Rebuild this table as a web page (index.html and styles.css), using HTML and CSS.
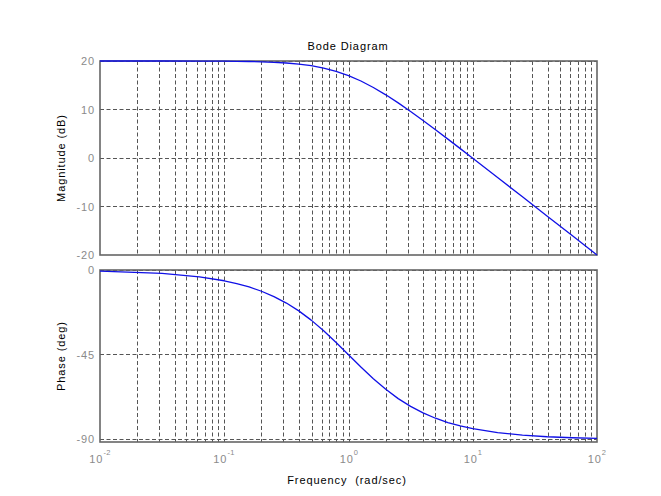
FILE: index.html
```html
<!DOCTYPE html>
<html>
<head>
<meta charset="utf-8">
<title>Bode Diagram</title>
<link rel="stylesheet" href="styles.css">
</head>
<body>
<div class="figure">
<svg class="plot" width="661" height="496" viewBox="0 0 661 496" xmlns="http://www.w3.org/2000/svg">
  <rect class="bg" x="0" y="0" width="661" height="496"/>

  <!-- grids -->
  <path class="grid" d="
    M137.5 61V255 M159.5 61V255 M175.5 61V255 M186.5 61V255 M197.5 61V255 M205.5 61V255 M212.5 61V255 M218.5 61V255 M224.5 61V255
    M261.5 61V255 M283.5 61V255 M299.5 61V255 M312.5 61V255 M322.5 61V255 M329.5 61V255 M336.5 61V255 M343.5 61V255 M349.5 61V255
    M386.5 61V255 M408.5 61V255 M423.5 61V255 M435.5 61V255 M445.5 61V255 M453.5 61V255 M460.5 61V255 M467.5 61V255 M473.5 61V255
    M510.5 61V255 M532.5 61V255 M548.5 61V255 M560.5 61V255 M570.5 61V255 M578.5 61V255 M585.5 61V255 M591.5 61V255
    M100 61.5H597 M100 109.5H597 M100 158.5H597 M100 206.5H597
    M137.5 270V442 M159.5 270V442 M175.5 270V442 M186.5 270V442 M197.5 270V442 M205.5 270V442 M212.5 270V442 M218.5 270V442 M224.5 270V442
    M261.5 270V442 M283.5 270V442 M299.5 270V442 M312.5 270V442 M322.5 270V442 M329.5 270V442 M336.5 270V442 M343.5 270V442 M349.5 270V442
    M386.5 270V442 M408.5 270V442 M423.5 270V442 M435.5 270V442 M445.5 270V442 M453.5 270V442 M460.5 270V442 M467.5 270V442 M473.5 270V442
    M510.5 270V442 M532.5 270V442 M548.5 270V442 M560.5 270V442 M570.5 270V442 M578.5 270V442 M585.5 270V442 M591.5 270V442
    M100 270.5H597 M100 354.5H597 M100 439.5H597"/>

  <!-- axes boxes -->
  <rect class="box" x="100" y="61" width="497" height="194"/>
  <rect class="box" x="100" y="270" width="497" height="172"/>

  <!-- magnitude curve -->
  <polyline class="curve" points="100,61 162.1,61.02 199.4,61.08 224.25,61.21 236.7,61.33 249.1,61.52 261.5,61.82 273.95,62.29 286.4,63.01 298.8,64.1 311.2,65.72 323.65,68.06 336.1,71.31 348.5,75.6 360.9,81 373.35,87.46 385.8,94.82 398.2,102.9 410.6,111.51 423.05,120.49 435.5,129.72 447.9,139.12 460.3,148.63 472.75,158.21 497.6,177.48 522.45,196.83 547.3,216.21 572.15,235.6 597,255"/>

  <!-- phase curve -->
  <polyline class="curve" points="100,271.08 162.1,273.41 199.4,276.8 224.25,280.76 236.7,283.51 249.1,286.96 261.5,291.24 273.95,296.55 286.4,303.05 298.8,310.86 311.2,320.12 323.65,330.73 336.1,342.42 348.5,354.74 360.9,367.05 373.35,378.74 385.8,389.34 398.2,398.61 410.6,406.42 423.05,412.92 435.5,418.23 447.9,422.52 460.3,425.95 472.75,428.71 497.6,432.67 522.45,435.18 547.3,436.76 572.15,437.76 597,438.4"/>

  <!-- y tick labels -->
  <text class="tick ytick" x="95" y="65">20</text>
  <text class="tick ytick" x="95" y="113.5">10</text>
  <text class="tick ytick" x="95" y="162">0</text>
  <text class="tick ytick" x="95" y="210.5">-10</text>
  <text class="tick ytick" x="95" y="259">-20</text>
  <text class="tick ytick" x="95" y="274">0</text>
  <text class="tick ytick" x="95" y="358.5">-45</text>
  <text class="tick ytick" x="95" y="443">-90</text>

  <!-- x tick labels -->
  <text class="tick xtick" x="100" y="462.5">10<tspan class="exp" dy="-7.5">-2</tspan></text>
  <text class="tick xtick" x="224" y="462.5">10<tspan class="exp" dy="-7.5">-1</tspan></text>
  <text class="tick xtick" x="349" y="462.5">10<tspan class="exp" dy="-7.5">0</tspan></text>
  <text class="tick xtick" x="473" y="462.5">10<tspan class="exp" dy="-7.5">1</tspan></text>
  <text class="tick xtick" x="597" y="462.5">10<tspan class="exp" dy="-7.5">2</tspan></text>

  <!-- labels -->
  <text class="label title" x="348" y="50">Bode Diagram</text>
  <text class="label xlabel" x="347" y="484" xml:space="preserve">Frequency  (rad/sec)</text>
  <text class="label ylabel" transform="translate(65 158) rotate(-90)">Magnitude (dB)</text>
  <text class="label ylabel" transform="translate(65 356) rotate(-90)">Phase (deg)</text>
</svg>
</div>
</body>
</html>
```

FILE: styles.css
```css
html, body {
  margin: 0;
  padding: 0;
  background: #ffffff;
}

.figure {
  width: 661px;
  height: 496px;
  overflow: hidden;
}

.plot {
  display: block;
}

.bg {
  fill: #ffffff;
}

.grid {
  fill: none;
  stroke: #555555;
  stroke-width: 1;
  stroke-dasharray: 4 2.5;
}

.box {
  fill: none;
  stroke: #666666;
  stroke-width: 1.6;
}

.curve {
  fill: none;
  stroke: #1010e6;
  stroke-width: 1.3;
  stroke-linejoin: round;
}

.tick {
  font-family: "Liberation Sans", Arial, sans-serif;
  font-size: 11px;
  letter-spacing: 0.9px;
  fill: #8a8a8a;
}

.ytick {
  text-anchor: end;
}

.xtick {
  text-anchor: middle;
}

.exp {
  font-size: 7.5px;
  letter-spacing: 0.3px;
}

.label {
  font-family: "Liberation Sans", Arial, sans-serif;
  font-size: 11px;
  letter-spacing: 0.9px;
  fill: #000000;
  text-anchor: middle;
}

.xlabel {
  white-space: pre;
}
```
